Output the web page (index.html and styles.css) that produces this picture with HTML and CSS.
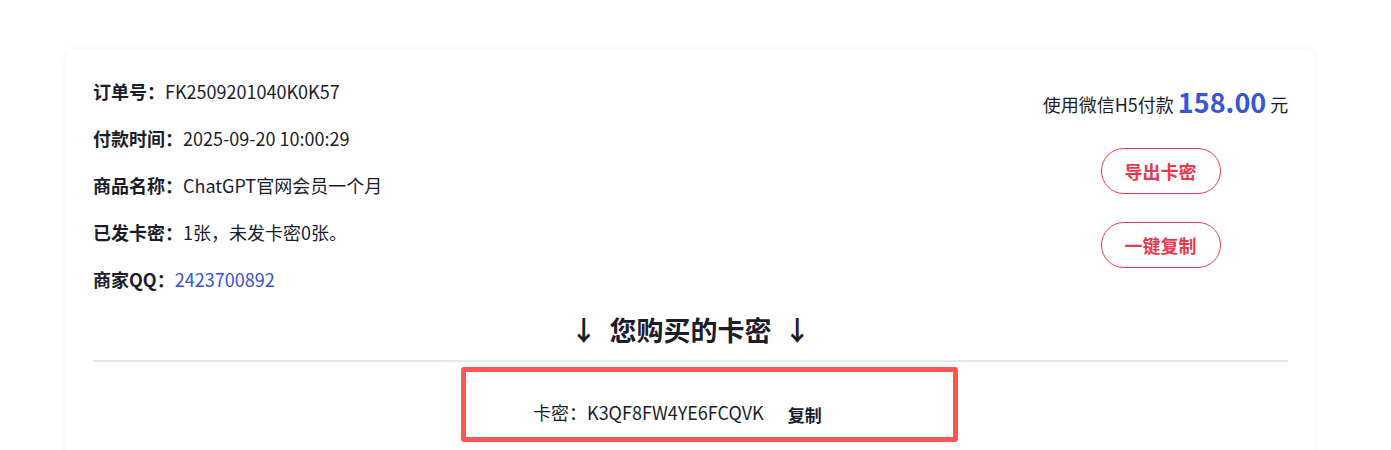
FILE: index.html
```html
<!DOCTYPE html>
<html lang="zh-CN">
<head>
<meta charset="utf-8">
<title>订单详情</title>
<link rel="stylesheet" href="styles.css">
</head>
<body>
<div class="card">
  <div class="top">
    <div class="info">
      <div class="row"><span class="label">订单号：</span>FK2509201040K0K57</div>
      <div class="row"><span class="label">付款时间：</span>2025-09-20 10:00:29</div>
      <div class="row"><span class="label">商品名称：</span>ChatGPT官网会员一个月</div>
      <div class="row"><span class="label">已发卡密：</span>1张，未发卡密0张。</div>
      <div class="row"><span class="label">商家QQ：</span><a class="link" href="#">2423700892</a></div>
    </div>
    <div class="side">
      <div class="price">使用微信H5付款 <span class="amount">158.00</span> 元</div>
      <button class="btn">导出卡密</button>
      <button class="btn">一键复制</button>
    </div>
  </div>
  <div class="title">↓&nbsp; 您购买的卡密 &nbsp;↓</div>
  <div class="divider"></div>
  <div class="keybox">
    <span class="key">卡密：K3QF8FW4YE6FCQVK</span><span class="copy">复制</span>
  </div>
</div>
</body>
</html>
```

FILE: styles.css
```css
* { box-sizing: border-box; }
html, body { margin: 0; padding: 0; background: #fff; }
body {
  font-family: "Noto Sans CJK SC", "Noto Sans", sans-serif;
  color: #1b1d2b;
  font-size: 18px;
  padding: 49px 76px 0 66px;
}
.card {
  background: #fff;
  border-radius: 8px;
  box-shadow: 0 0 6px rgba(0,0,0,0.06);
  padding: 29px 27px 40px 27px;
  height: 420px;
}
.top { display: flex; justify-content: space-between; }
.info { display: flex; flex-direction: column; gap: 20px; }
.row { line-height: 27px; height: 27px; }
.label { font-weight: 700; }
.link { color: #3451d6; text-decoration: none; }
.side {
  display: flex; flex-direction: column; align-items: center;
  width: 245px; padding-top: 8px;
}
.price { line-height: 32px; white-space: nowrap; }
.amount { color: #3556d8; font-size: 27px; font-weight: 700; vertical-align: -1px; }
.btn {
  width: 120px; height: 46px;
  margin-right: 10px;
  border: 1px solid #e8394f;
  border-radius: 23px;
  background: #fff;
  color: #e8394f;
  font-family: inherit;
  font-size: 18px;
  font-weight: 700;
  padding: 0;
}
.btn:first-of-type { margin-top: 28px; }
.btn + .btn { margin-top: 28px; }
.title {
  text-align: center;
  font-size: 27px;
  font-weight: 700;
  line-height: 38px;
  margin-top: 18px;
}
.divider { height: 2px; background: #e6e9ec; margin-top: 11px; }
.keybox {
  margin: 5px 0 0 368px;
  width: 497px;
  height: 75px;
  border: 5px solid #ff5555;
  border-radius: 3px;
  padding: 27px 0 0 67px;
  line-height: 26px;
  white-space: nowrap;
}
.key { color: #1b1d2b; }
.copy { font-weight: 700; margin-left: 24px; font-size: 17px; vertical-align: -2px; }
```
